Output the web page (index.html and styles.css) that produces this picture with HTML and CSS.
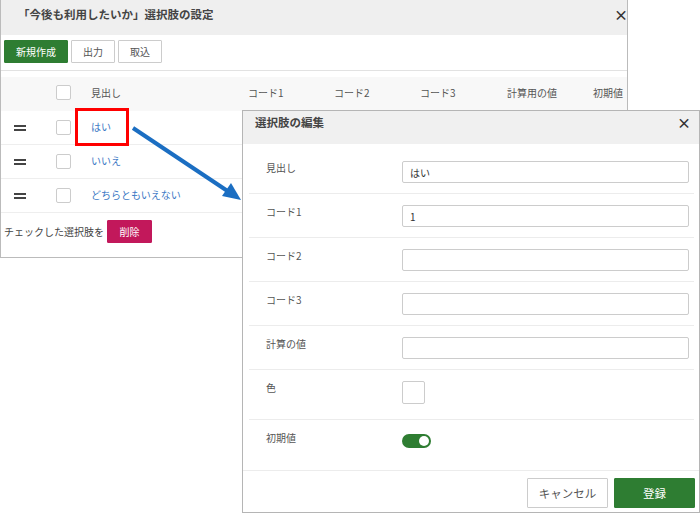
FILE: index.html
```html
<!DOCTYPE html>
<html>
  <head>
    <meta charset="utf-8">
    <title>選択肢の設定</title>
    <link rel="stylesheet" href="styles.css">
  </head>
  <body>
    <div class="panel">
      <div class="panel-head">
        <span>「今後も利用したいか」選択肢の設定</span>
        <span class="close">×</span>
      </div>
      <div class="toolbar">
        <button class="btn primary">新規作成</button>
        <button class="btn">出力</button>
        <button class="btn">取込</button>
      </div>
      <div class="list">
        <div class="row head">
          <span></span>
          <span class="check"></span>
          <span>見出し</span>
          <span>コード1</span>
          <span>コード2</span>
          <span>コード3</span>
          <span>計算用の値</span>
          <span>初期値</span>
        </div>
        <div class="row">
          <span class="handle"></span>
          <span class="check"></span>
          <span class="name"><a>はい</a><i class="mark"></i></span>
        </div>
        <div class="row">
          <span class="handle"></span>
          <span class="check"></span>
          <span class="name"><a>いいえ</a></span>
        </div>
        <div class="row">
          <span class="handle"></span>
          <span class="check"></span>
          <span class="name"><a>どちらともいえない</a></span>
        </div>
      </div>
      <div class="panel-foot">
        チェックした選択肢を
        <button class="btn danger">削除</button>
      </div>
    </div>

    <svg class="arrow" width="700" height="513" viewBox="0 0 700 513">
      <line x1="133" y1="128" x2="229" y2="192" stroke="#1b6ec2" stroke-width="4" />
      <polygon points="241,200 222,196 231,183" fill="#1b6ec2" />
    </svg>

    <div class="modal">
      <div class="modal-head">
        <span>選択肢の編集</span>
        <span class="close">×</span>
      </div>
      <div class="modal-body">
        <div class="field">
          <label>見出し</label>
          <input type="text" value="はい">
        </div>
        <div class="field">
          <label>コード1</label>
          <input type="text" value="1">
        </div>
        <div class="field">
          <label>コード2</label>
          <input type="text">
        </div>
        <div class="field">
          <label>コード3</label>
          <input type="text">
        </div>
        <div class="field">
          <label>計算の値</label>
          <input type="text">
        </div>
        <div class="field">
          <label>色</label>
          <span class="swatch"></span>
        </div>
        <div class="field last">
          <label>初期値</label>
          <span class="toggle"><i></i></span>
        </div>
      </div>
      <div class="modal-foot">
        <button class="btn big">キャンセル</button>
        <button class="btn big primary">登録</button>
      </div>
    </div>
  </body>
</html>
```

FILE: styles.css
```css
* {
  box-sizing: border-box;
}
body {
  margin: 0;
  width: 700px;
  height: 513px;
  font-family: 'Noto Sans CJK JP', 'Noto Sans', sans-serif;
  font-size: 10px;
  color: #555;
  background: #fff;
  position: relative;
  overflow: hidden;
}
.btn {
  font-family: inherit;
  font-size: 10px;
  height: 23px;
  padding: 0 11px;
  border: 1px solid #ccc;
  border-radius: 1px;
  background: #fff;
  color: #555;
  line-height: 21px;
}
.btn.primary {
  background: #2e7d32;
  border-color: #2e7d32;
  color: #fff;
}
.btn.danger {
  background: #c2185b;
  border-color: #c2185b;
  color: #fff;
  width: 45px;
  padding: 0;
}
.close {
  font-weight: bold;
  font-size: 14px;
  color: #333;
}

/* back panel */
.panel {
  width: 628px;
  height: 258px;
  border: 1px solid #bbb;
  border-top: 0;
  overflow: hidden;
}
.panel-head {
  height: 35px;
  background: #efefef;
  padding: 6px 0 0 17px;
  display: flex;
  justify-content: space-between;
  font-size: 11.5px;
  font-weight: bold;
  color: #444;
  line-height: 17px;
}
.panel-head .close {
  margin-right: -1px;
}
.toolbar {
  height: 36px;
  display: flex;
  gap: 3px;
  padding: 5px 0 0 3px;
  border-bottom: 1px solid #e2e2e2;
}
.list {
  margin-top: 6px;
}
.row {
  display: grid;
  grid-template-columns: 55px 35px 157px 86px 86px 87px 86px 40px;
  align-items: center;
  height: 34px;
  border-bottom: 1px solid #eee;
}
.row.head {
  background: #f8f8f8;
  border-bottom: 0;
  height: 34px;
  padding-bottom: 3px;
}
.handle {
  justify-self: start;
  margin-left: 13px;
  width: 12px;
  height: 6px;
  border-top: 2px solid #444;
  border-bottom: 2px solid #444;
}
.check {
  display: block;
  width: 15px;
  height: 15px;
  border: 1px solid #ccc;
  border-radius: 2px;
  background: #fff;
}
.name {
  position: relative;
  padding-bottom: 3px;
}
.name a {
  color: #3b78c4;
}
.mark {
  position: absolute;
  left: -16px;
  top: -11px;
  width: 54px;
  height: 38px;
  border: 3px solid #f00;
}
.panel-foot {
  display: flex;
  align-items: center;
  gap: 3px;
  padding: 7px 0 0 3px;
  color: #444;
}

/* arrow overlay */
.arrow {
  position: absolute;
  left: 0;
  top: 0;
}

/* edit modal */
.modal {
  position: absolute;
  left: 242px;
  top: 110px;
  width: 458px;
  height: 403px;
  border: 1px solid #b5b5b5;
  background: #fff;
  display: flex;
  flex-direction: column;
}
.modal-head {
  height: 33px;
  background: #f0f0f0;
  display: flex;
  justify-content: space-between;
  padding: 3px 8px 0 12px;
  font-size: 11.5px;
  font-weight: bold;
  color: #444;
  line-height: 17px;
}
.modal-body {
  padding: 6px 5px 0 6px;
  flex: 1;
}
.field {
  display: grid;
  grid-template-columns: 153px 1fr;
  align-items: start;
  padding: 11px 0 10px;
  border-bottom: 1px solid #ececec;
}
.field label {
  padding-left: 17px;
  line-height: 14px;
}
.field.last {
  border-bottom: 0;
  padding-bottom: 0;
}
.field input {
  font-family: inherit;
  font-size: 10px;
  color: #333;
  height: 22px;
  margin-right: 5px;
  border: 1px solid #ccc;
  border-radius: 2px;
  padding: 0 7px;
}
.swatch {
  display: block;
  width: 23px;
  height: 23px;
  border: 1px solid #ccc;
  border-radius: 2px;
  margin-bottom: 5px;
}
.toggle {
  display: block;
  width: 29px;
  height: 14px;
  margin-top: 3px;
  border-radius: 7px;
  background: #2e7d32;
  position: relative;
}
.toggle i {
  position: absolute;
  right: 2px;
  top: 2px;
  width: 10px;
  height: 10px;
  border-radius: 50%;
  background: #fff;
}
.modal-foot {
  height: 42px;
  border-top: 1px solid #ececec;
  display: flex;
  justify-content: flex-end;
  gap: 6px;
  padding: 7px 4px 0 0;
}
.btn.big {
  width: 81px;
  height: 30px;
  font-size: 11.5px;
  padding: 0;
}
```
